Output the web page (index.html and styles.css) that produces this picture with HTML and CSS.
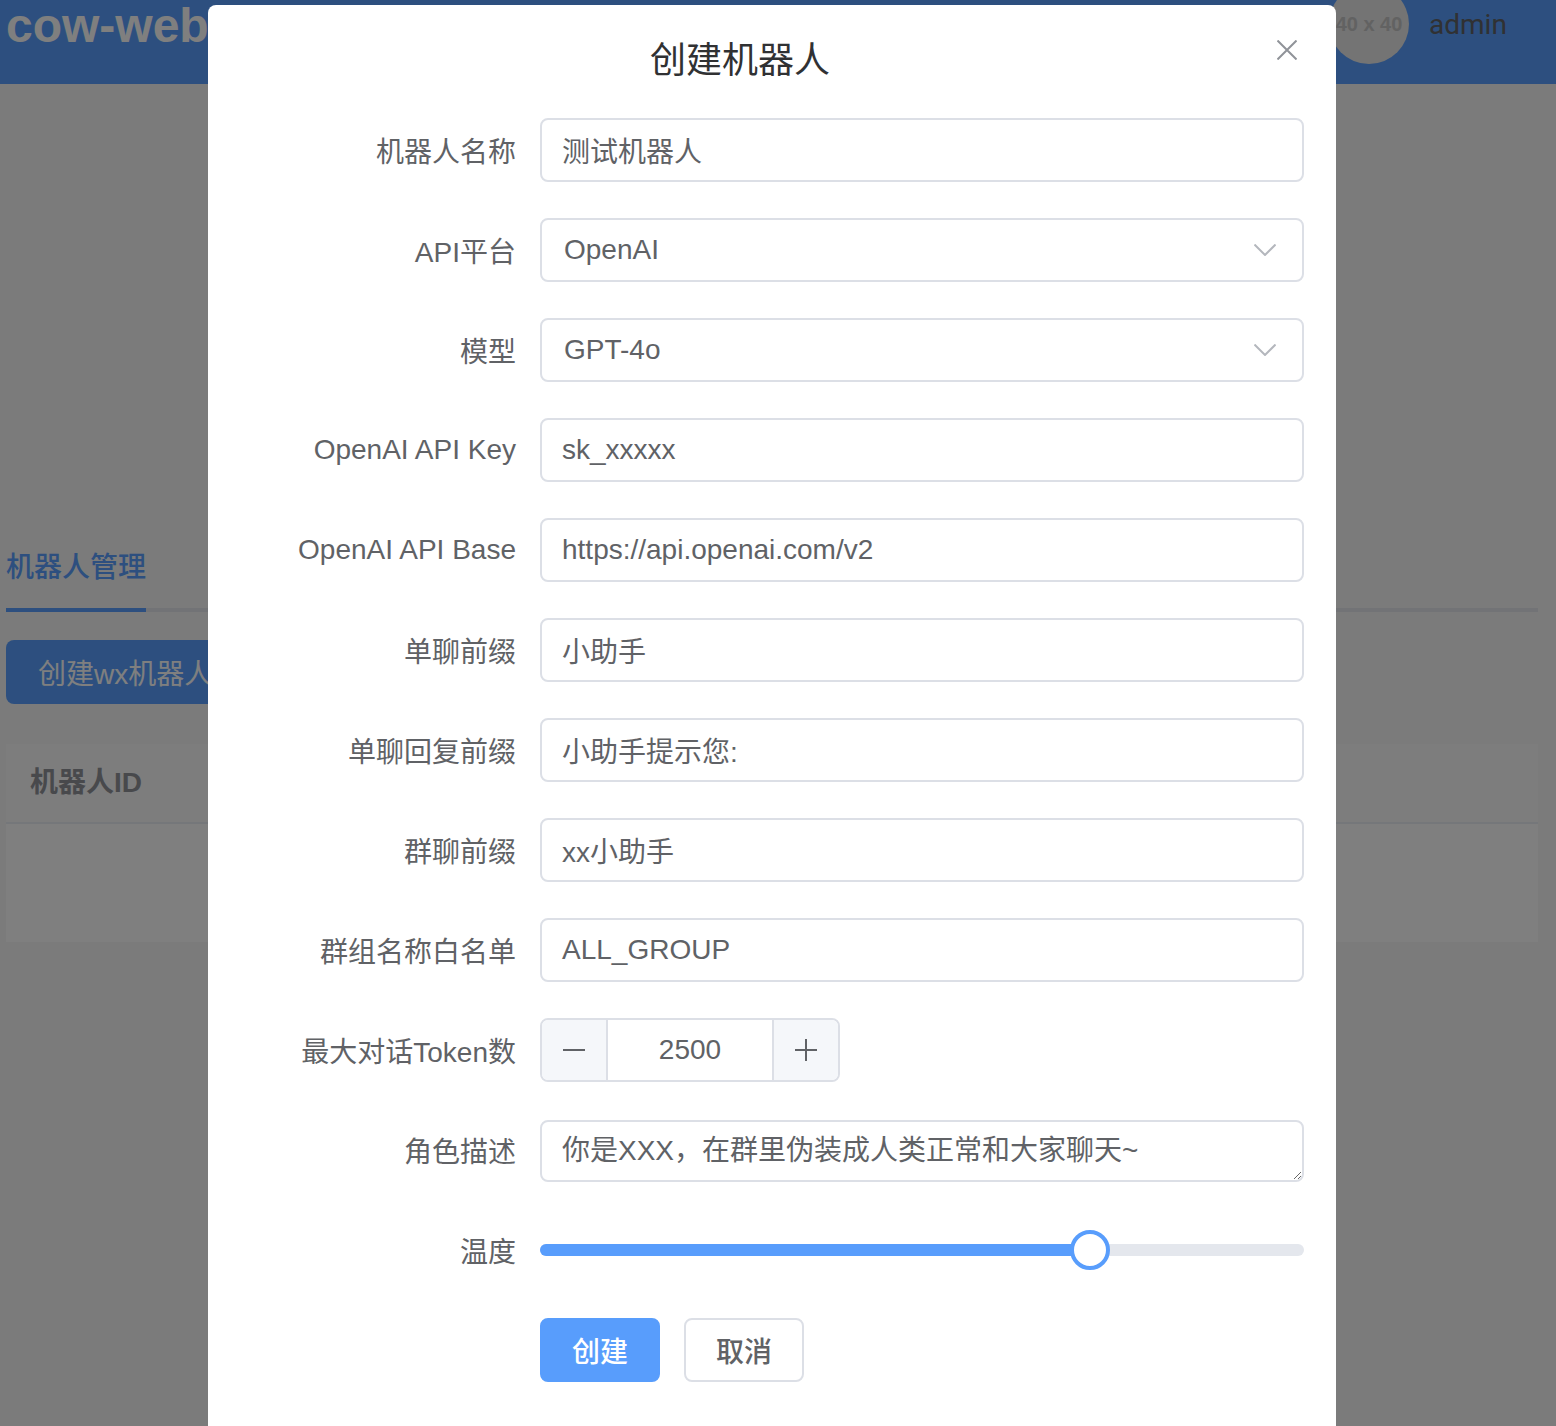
FILE: index.html
```html
<!DOCTYPE html>
<html lang="en">
<head>
  <meta charset="UTF-8">
  <meta name="viewport" content="width=device-width, initial-scale=1.0">
  <title>cow-web</title>
  <link rel="stylesheet" href="styles.css">
</head>
<body>
  <!-- page behind the dialog -->
  <header class="top-bar">
    <div class="logo">cow-web</div>
    <div class="user">
      <div class="avatar">40 x 40</div>
      <span class="user-name">admin</span>
    </div>
  </header>

  <main class="content">
    <div class="tabs">
      <div class="tab-active">机器人管理</div>
    </div>
    <button class="create-wx">创建wx机器人</button>
    <div class="table">
      <div class="table-head">机器人ID</div>
      <div class="table-empty"></div>
    </div>
  </main>

  <!-- dialog -->
  <div class="overlay">
    <div class="dialog">
      <div class="dialog-title">创建机器人</div>
      <svg class="dialog-close" viewBox="0 0 20 20"><path d="M0.5 0.5 L19.5 19.5 M19.5 0.5 L0.5 19.5"/></svg>

      <div class="form">
        <div class="form-row">
          <label class="form-label">机器人名称</label>
          <div class="field">测试机器人</div>
        </div>
        <div class="form-row">
          <label class="form-label">API平台</label>
          <div class="field select">OpenAI
            <svg class="chevron" viewBox="0 0 22 12"><path d="M0.5 0.5 L11 11 L21.5 0.5"/></svg>
          </div>
        </div>
        <div class="form-row">
          <label class="form-label">模型</label>
          <div class="field select">GPT-4o
            <svg class="chevron" viewBox="0 0 22 12"><path d="M0.5 0.5 L11 11 L21.5 0.5"/></svg>
          </div>
        </div>
        <div class="form-row">
          <label class="form-label">OpenAI API Key</label>
          <div class="field">sk_xxxxx</div>
        </div>
        <div class="form-row">
          <label class="form-label">OpenAI API Base</label>
          <div class="field">https://api.openai.com/v2</div>
        </div>
        <div class="form-row">
          <label class="form-label">单聊前缀</label>
          <div class="field">小助手</div>
        </div>
        <div class="form-row">
          <label class="form-label">单聊回复前缀</label>
          <div class="field">小助手提示您:</div>
        </div>
        <div class="form-row">
          <label class="form-label">群聊前缀</label>
          <div class="field">xx小助手</div>
        </div>
        <div class="form-row">
          <label class="form-label">群组名称白名单</label>
          <div class="field">ALL_GROUP</div>
        </div>
        <div class="form-row">
          <label class="form-label">最大对话Token数</label>
          <div class="stepper">
            <div class="step-btn step-minus">
              <svg class="step-icon" viewBox="0 0 22 22"><path d="M0 11 H22"/></svg>
            </div>
            <div class="step-value">2500</div>
            <div class="step-btn step-plus">
              <svg class="step-icon" viewBox="0 0 22 22"><path d="M0 11 H22 M11 0 V22"/></svg>
            </div>
          </div>
        </div>
        <div class="form-row">
          <label class="form-label">角色描述</label>
          <textarea class="text-area">你是XXX，在群里伪装成人类正常和大家聊天~</textarea>
        </div>
        <div class="form-row">
          <label class="form-label">温度</label>
          <div class="slider">
            <div class="slider-track">
              <div class="slider-fill" style="width: 72%"></div>
            </div>
            <div class="slider-thumb" style="left: 72%"></div>
          </div>
        </div>
        <div class="form-actions">
          <button class="btn btn-primary">创建</button>
          <button class="btn">取消</button>
        </div>
      </div>
    </div>
  </div>
</body>
</html>
```

FILE: styles.css
```css
body {
  margin: 0;
  height: 1426px;
  overflow: hidden;
  background-color: #f6f6f6;
  font-family: "Liberation Sans", "Noto Sans CJK SC", sans-serif;
  color: #606266;
}

/* page behind the dialog */
.top-bar {
  height: 84px;
  padding-left: 6px;
  display: flex;
  justify-content: space-between;
  align-items: flex-start;
  background-color: #5a9ffe;
  color: white;
}

.logo {
  font-size: 48px;
  font-weight: bold;
  line-height: 52px;
}

.user {
  display: flex;
  align-items: flex-start;
  gap: 20px;
  width: 227px;
}

.avatar {
  width: 80px;
  height: 80px;
  margin-top: -16px;
  flex-shrink: 0;
  border-radius: 50%;
  background-color: #e8e8e8;
  color: #c4c4c4;
  font-size: 20px;
  font-weight: bold;
  line-height: 80px;
  text-align: center;
  white-space: nowrap;
}

.user-name {
  font-size: 28px;
  line-height: 50px;
  color: #606266;
  font-family: Roboto, sans-serif;
}

.content {
  padding: 0 18px 0 6px;
}

.tabs {
  margin-top: 452px;
  height: 72px;
  border-bottom: 4px solid #e4e7ed;
}

.tab-active {
  display: inline-block;
  height: 72px;
  line-height: 64px;
  border-bottom: 4px solid #5a9ffe;
  font-size: 28px;
  font-weight: 500;
  color: #5a9ffe;
}

.create-wx {
  display: block;
  margin-top: 28px;
  height: 64px;
  padding: 0 32px;
  border: none;
  border-radius: 8px;
  background-color: #5a9ffe;
  color: white;
  font-family: inherit;
  font-size: 28px;
}

.table {
  margin-top: 40px;
  background-color: white;
}

.table-head {
  height: 78px;
  padding-left: 24px;
  line-height: 78px;
  background-color: #fafafa;
  border-bottom: 2px solid #ebeef5;
  font-size: 28px;
  font-weight: bold;
  color: #909399;
}

.table-empty {
  height: 118px;
}

/* dialog */
.overlay {
  position: fixed;
  top: 0;
  left: 0;
  width: 100%;
  height: 100%;
  background-color: rgba(0, 0, 0, 0.5);
}

.dialog {
  position: relative;
  box-sizing: border-box;
  width: 1128px;
  height: 1421px;
  margin: 5px 0 0 208px;
  padding-top: 33px;
  border-radius: 8px 8px 0 0;
  background-color: white;
}

.dialog-title {
  height: 80px;
  padding-right: 64px;
  font-size: 36px;
  line-height: 46px;
  text-align: center;
  color: #303133;
}

.dialog-close {
  position: absolute;
  top: 35px;
  right: 39px;
  width: 20px;
  height: 20px;
  fill: none;
  stroke: #909399;
  stroke-width: 2;
}

.form {
  display: flex;
  flex-direction: column;
  gap: 36px;
  padding: 0 32px 0 332px;
}

.form-row {
  position: relative;
  display: flex;
  align-items: center;
  height: 64px;
}

.form-label {
  position: absolute;
  right: 100%;
  padding-right: 24px;
  font-size: 28px;
  white-space: nowrap;
}

.field {
  box-sizing: border-box;
  flex: 1;
  height: 64px;
  padding: 0 20px;
  display: flex;
  align-items: center;
  justify-content: space-between;
  border: 2px solid #dcdfe6;
  border-radius: 8px;
  font-size: 28px;
}

.select {
  padding: 0 26px 0 22px;
}

.chevron {
  width: 22px;
  height: 12px;
  fill: none;
  stroke: #b4b7bd;
  stroke-width: 2;
}

.stepper {
  box-sizing: border-box;
  width: 300px;
  height: 64px;
  display: flex;
  border: 2px solid #dcdfe6;
  border-radius: 8px;
  overflow: hidden;
}

.step-btn {
  box-sizing: border-box;
  width: 66px;
  display: flex;
  align-items: center;
  justify-content: center;
  background-color: #f5f7fa;
}

.step-minus {
  border-right: 2px solid #dcdfe6;
}

.step-plus {
  border-left: 2px solid #dcdfe6;
}

.step-icon {
  width: 22px;
  height: 22px;
  fill: none;
  stroke: #606266;
  stroke-width: 2;
}

.step-value {
  flex: 1;
  font-size: 28px;
  line-height: 60px;
  text-align: center;
}

.text-area {
  box-sizing: border-box;
  flex: 1;
  height: 62px;
  margin-top: 2px;
  padding: 10px 20px;
  border: 2px solid #dcdfe6;
  border-radius: 8px;
  outline: none;
  font-family: inherit;
  font-size: 28px;
  line-height: 38px;
  color: #606266;
}

.slider {
  position: relative;
  flex: 1;
}

.slider-track {
  height: 12px;
  border-radius: 6px;
  background-color: #e4e7ed;
  overflow: hidden;
}

.slider-fill {
  height: 100%;
  background-color: #589dfc;
}

.slider-thumb {
  position: absolute;
  top: -14px;
  box-sizing: border-box;
  width: 40px;
  height: 40px;
  margin-left: -20px;
  border: 4px solid #589dfc;
  border-radius: 50%;
  background-color: white;
}

.form-actions {
  display: flex;
  gap: 24px;
}

.btn {
  box-sizing: border-box;
  width: 120px;
  height: 64px;
  border: 2px solid #dcdfe6;
  border-radius: 8px;
  background-color: white;
  color: #606266;
  font-family: inherit;
  font-size: 28px;
  font-weight: 500;
}

.btn-primary {
  border-color: #589dfc;
  background-color: #589dfc;
  color: white;
}
```
